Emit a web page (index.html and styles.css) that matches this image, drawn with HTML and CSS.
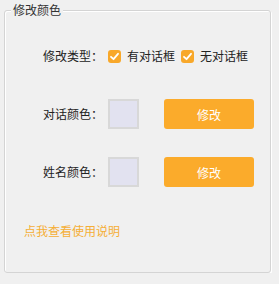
FILE: index.html
```html
<!DOCTYPE html>
<html>
<head>
    <title>修改颜色</title>
    <link rel="stylesheet" href="styles.css">
</head>
<body>
    <div class="group">
        <span class="group-title">修改颜色</span>

        <div class="row">
            <span class="label">修改类型：</span>
            <label class="check">
                <span class="box"><svg viewBox="0 0 13 13" width="13" height="13"><path d="M3 6.8 L5.5 9.2 L10 3.8" fill="none" stroke="#fff" stroke-width="1.8" stroke-linecap="round" stroke-linejoin="round"/></svg></span>
                有对话框
            </label>
            <label class="check">
                <span class="box"><svg viewBox="0 0 13 13" width="13" height="13"><path d="M3 6.8 L5.5 9.2 L10 3.8" fill="none" stroke="#fff" stroke-width="1.8" stroke-linecap="round" stroke-linejoin="round"/></svg></span>
                无对话框
            </label>
        </div>

        <div class="row">
            <span class="label">对话颜色：</span>
            <span class="swatch"></span>
            <button class="btn">修改</button>
        </div>

        <div class="row">
            <span class="label">姓名颜色：</span>
            <span class="swatch"></span>
            <button class="btn">修改</button>
        </div>

        <div class="row link-row">
            <a class="help-link">点我查看使用说明</a>
        </div>
    </div>
</body>
</html>
```

FILE: styles.css
```css
body {
    margin: 0;
    background: #f0f0f0;
    font-family: "Noto Sans CJK SC", "Noto Sans", sans-serif;
    font-size: 12px;
    color: #222;
}
.group {
    position: relative;
    box-sizing: border-box;
    width: 267px;
    height: 263px;
    margin: 10px 0 0 4px;
    border: 1px solid #d4d4d4;
    border-radius: 3px;
    box-shadow: 1px 1px 0 #fff, inset 1px 1px 0 #fff;
    padding: 30px 0 0 38px;
    display: flex;
    flex-direction: column;
    gap: 28px;
}
.group-title {
    position: absolute;
    top: -9px;
    left: 6px;
    padding: 0 2px;
    background: #f0f0f0;
    line-height: 16px;
    color: #333;
}
.row {
    display: flex;
    align-items: center;
    height: 30px;
}
.label {
    width: 65px;
    line-height: 16px;
}
.check {
    display: flex;
    align-items: center;
    gap: 6px;
    margin-right: 6px;
    line-height: 16px;
}
.box {
    display: block;
    width: 13px;
    height: 13px;
    border-radius: 3px;
    background: #f8a82a;
}
.box svg {
    display: block;
}
.swatch {
    box-sizing: border-box;
    width: 31px;
    height: 30px;
    border: 2px solid #d8d8d8;
    background: #e2e2f0;
}
.btn {
    width: 90px;
    height: 30px;
    margin-left: 25px;
    border: none;
    border-radius: 3px;
    background: #fbab2b;
    color: #fff;
    font-family: inherit;
    font-size: 12px;
    padding: 0;
}
.link-row {
    margin-left: -19px;
    margin-top: 1px;
}
.help-link {
    color: #f5ae35;
    line-height: 16px;
    cursor: pointer;
}
```
